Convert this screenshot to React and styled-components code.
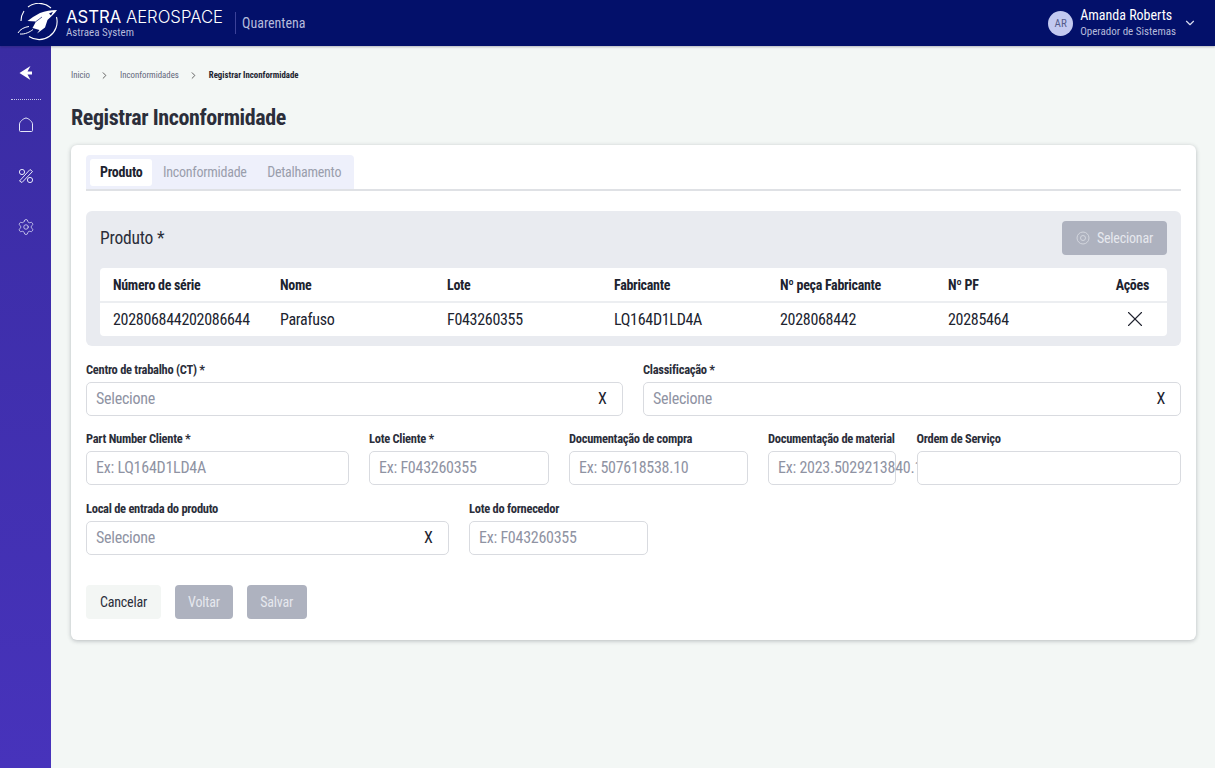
import React from 'react';
import styled, { createGlobalStyle } from 'styled-components';
import { ChevronDown, ChevronRight, X, Settings } from 'lucide-react';

const GlobalStyle = createGlobalStyle`
    html, body {
        margin: 0;
        padding: 0;
        height: 100%;
    }

    body {
        background: #f3f7f5;
        font-family: 'Roboto', 'Liberation Sans', sans-serif;
        font-stretch: 75%;
        color: #20232f;
    }

    * {
        box-sizing: border-box;
    }
`;

const Page = styled.div`
    width: 1215px;
    height: 768px;
    overflow: hidden;
    display: flex;
    flex-direction: column;
`;

const Header = styled.header`
    height: 46px;
    flex: none;
    background: #03106a;
    display: flex;
    align-items: center;
    padding: 0 18px 0 16px;
    box-shadow: 0 1px 2px rgba(30, 30, 60, 0.3);
    position: relative;
    z-index: 2;
`;

const Logo = styled.svg`
    width: 44px;
    height: 40px;
    flex: none;
`;

const Brand = styled.div`
    margin-left: 6px;
    width: 169px;
    color: #fff;
`;

const BrandName = styled.div`
    font-family: 'Inter', 'Liberation Sans', sans-serif;
    font-stretch: 100%;
    font-size: 16.7px;
    line-height: 18px;
    font-weight: 300;
    white-space: nowrap;

    b {
        font-weight: 400;
    }
`;

const BrandSub = styled.div`
    font-size: 11px;
    line-height: 13px;
    color: #b6bbdc;
`;

const Divider = styled.div`
    width: 1px;
    height: 22px;
    background: #3c4299;
`;

const Module = styled.div`
    margin-left: 6px;
    font-size: 14px;
    color: #b6bbdc;
`;

const User = styled.div`
    margin-left: auto;
    display: flex;
    align-items: center;
    color: #fff;
`;

const Avatar = styled.div`
    width: 25px;
    height: 25px;
    border-radius: 50%;
    background: #c3c9f0;
    color: #555c8c;
    font-size: 11px;
    display: flex;
    align-items: center;
    justify-content: center;
    margin-right: 7px;
`;

const UserText = styled.div`
    margin-right: 7px;
`;

const UserName = styled.div`
    font-size: 14px;
    line-height: 16px;
`;

const UserRole = styled.div`
    font-size: 11px;
    line-height: 14px;
    margin-top: 2px;
    color: #b6bbdc;
`;

const Body = styled.div`
    flex: 1;
    display: flex;
    min-height: 0;
`;

const Sidebar = styled.nav`
    width: 51px;
    flex: none;
    background: linear-gradient(180deg, #3a2ca3 0%, #4733bb 100%);
    display: flex;
    flex-direction: column;
    align-items: center;
    padding-top: 18px;
    color: #e4e6f8;
`;

const SideRule = styled.div`
    width: 30px;
    margin: 17px 0 16px;
    border-top: 1px dotted #c5c7ea;
`;

const SideIcon = styled.div`
    width: 18px;
    height: 18px;
    margin-bottom: ${(p) => (p.$flush ? 0 : 33)}px;
    display: flex;

    svg {
        width: 100%;
        height: 100%;
    }
`;

const Main = styled.main`
    flex: 1;
    padding: 22px 19px 0 20px;
    min-width: 0;
`;

const Crumbs = styled.div`
    display: flex;
    align-items: center;
    height: 14px;
    font-size: 8.8px;
    color: #62667a;
`;

const CrumbSep = styled(ChevronRight)`
    width: 11px;
    height: 11px;
    margin: 0 9.5px;
    color: #555;
`;

const CrumbCurrent = styled.span`
    font-weight: 700;
    color: #20232f;
`;

const Title = styled.h1`
    margin: 21px 0 13px;
    font-size: 22px;
    line-height: 29px;
    letter-spacing: -0.4px;
    font-weight: 700;
    color: #2b2e3a;
`;

const Card = styled.section`
    height: 495px;
    background: #fff;
    border-radius: 6px;
    box-shadow: 0 1px 4px rgba(40, 45, 60, 0.3);
    padding: 10px 15px 0;
`;

const TabBar = styled.div`
    height: 36px;
    border-bottom: 2px solid #dfe1e5;
`;

const TabGroup = styled.div`
    display: inline-flex;
    height: 34px;
    padding: 4px 3px 4px 4px;
    gap: 0.5px;
    background: #eef0fb;
    border-radius: 4px 4px 0 0;
`;

const Tab = styled.div`
    height: 27px;
    padding: 0 10px 1px;
    display: flex;
    align-items: center;
    border-radius: 3px;
    font-size: 14px;
    letter-spacing: -0.25px;
    font-weight: ${(p) => (p.$active ? 700 : 400)};
    color: ${(p) => (p.$active ? '#20232f' : '#9a9eac')};
    background: ${(p) => (p.$active ? '#fff' : 'transparent')};
`;

const ProductPanel = styled.div`
    margin-top: 20px;
    height: 135px;
    background: #e9ebf0;
    border-radius: 6px;
    padding: 10px 14px 10px;
`;

const PanelHead = styled.div`
    height: 34px;
    display: flex;
    align-items: center;
    justify-content: space-between;
    margin-bottom: 13px;
`;

const PanelTitle = styled.div`
    font-size: 17.5px;
    letter-spacing: -0.2px;
    color: #2b2e3a;
`;

const Button = styled.button`
    height: 34px;
    padding: 0 ${(p) => p.$pad || 14}px;
    border: none;
    border-radius: 4px;
    display: inline-flex;
    align-items: center;
    gap: 7px;
    font-family: inherit;
    font-stretch: 75%;
    font-size: 14px;
    letter-spacing: -0.2px;
    color: ${(p) => (p.$light ? '#2b2e3a' : '#e6e8ee')};
    background: ${(p) => (p.$light ? '#f3f6f4' : '#aeb2bf')};
`;

const ProductTable = styled.div`
    background: #fff;
    border-radius: 4px;
`;

const TableRow = styled.div`
    height: ${(p) => (p.$head ? 35 : 33)}px;
    display: grid;
    grid-template-columns: 167px 167px 167px 166px 168px 1fr 46px;
    align-items: center;
    padding: 0 18px ${(p) => (p.$head ? 0 : 1)}px 13px;
    font-size: ${(p) => (p.$head ? 14 : 16)}px;
    letter-spacing: -0.3px;
    font-weight: ${(p) => (p.$head ? 700 : 400)};
    border-bottom: ${(p) => (p.$head ? '2px solid #eceef1' : 'none')};
`;

const Action = styled.div`
    display: flex;
    justify-content: flex-end;
`;

const RemoveIcon = styled(X)`
    width: 26px;
    height: 26px;
    margin-right: 1px;
    stroke-width: 1;
`;

const FormGrid = styled.div`
    display: grid;
    column-gap: 20.5px;
    grid-template-columns: ${(p) => p.$cols};
    margin-top: ${(p) => p.$top}px;
`;

const Field = styled.div`
    position: relative;
    min-width: 0;
`;

const Label = styled.div`
    height: 15px;
    font-size: 12.5px;
    line-height: 15px;
    letter-spacing: -0.28px;
    font-weight: 700;
    margin-bottom: 5px;
    white-space: nowrap;
    color: #2b2e3a;
`;

const Control = styled.div`
    height: 34px;
    padding: 0 ${(p) => (p.$select ? 15 : 9)}px 1px 9px;
    background: #fff;
    border: 1px solid #d9dbe0;
    border-radius: 5px;
    display: flex;
    align-items: center;
    justify-content: space-between;
    font-size: 16px;
    letter-spacing: -0.25px;
    white-space: nowrap;
    color: #8f93a3;
`;

const ClearMark = styled.span`
    font-size: 16px;
    color: #20232f;
`;

const Actions = styled.div`
    display: flex;
    gap: 13.5px;
    margin-top: 30px;
`;

const RocketLogo = () => (
    <Logo viewBox="0 0 44 40" fill="none">
        <path d="M12 4A18 18 0 0 1 35 5M40.500 14A18 18 0 0 1 13 33.500M5 18A18 18 0 0 1 8 8" stroke="#fff" strokeWidth="1.1" />
        <path d="M2 30C4 26 9 24 13 23.500M4 31C9 31.500 14 29 17 26.500" stroke="#fff" strokeWidth="1" />
        <path d="M41 7C35 7.300 29 8 24 10L17 14L11.500 18L20 18.500L16.500 25L23.500 27L21 30.500L29 24.500L31.500 17C35 14 39 10 41 7Z" fill="#fff" />
        <path d="M33 10.500L37 8.800L35 12.500Z" fill="#03106a" />
        <path d="M20 18.500L26 14" stroke="#03106a" strokeWidth="0.7" />
    </Logo>
);

const BackIcon = () => (
    <svg viewBox="0 0 18 18" fill="#fff">
        <path d="M13.500 2L2.500 9L13.500 16L10.500 10.500L15 10.500L15 7.500L10.500 7.500Z" />
    </svg>
);

const HomeIcon = () => (
    <svg viewBox="0 0 18 18" fill="none" stroke="currentColor" strokeWidth="1">
        <path d="M2.500 8C2.500 6 6 2.500 9 2C12 2.500 15.500 6 15.500 8L15.500 14.500C15.500 15.300 15 15.500 14.500 15.500L3.500 15.500C3 15.500 2.500 15.300 2.500 14.500Z" />
    </svg>
);

const ToolsIcon = () => (
    <svg viewBox="0 0 18 18" fill="none" stroke="currentColor" strokeWidth="1">
        <circle cx="5" cy="5" r="2.600" />
        <circle cx="13" cy="13" r="2.600" />
        <path d="M2.500 14L13 2.500L15.500 4.500L5 15.500Z" />
    </svg>
);

const FIELDS_ROW_2 = [
    { label: 'Part Number Cliente *', placeholder: 'Ex: LQ164D1LD4A' },
    { label: 'Lote Cliente *', placeholder: 'Ex: F043260355' },
    { label: 'Documentação de compra', placeholder: 'Ex: 507618538.10' },
    { label: 'Documentação de material', placeholder: 'Ex: 2023.5029213840.1' },
    { label: 'Ordem de Serviço', placeholder: '' },
];

const FormField = ({ label, placeholder, select }) => (
    <Field>
        <Label>{label}</Label>
        <Control $select={select}>
            <span>{placeholder}</span>
            {select && <ClearMark>X</ClearMark>}
        </Control>
    </Field>
);

function App() {
    return (
        <Page>
            <GlobalStyle />
            <Header>
                <RocketLogo />
                <Brand>
                    <BrandName><b>ASTRA</b> AEROSPACE</BrandName>
                    <BrandSub>Astraea System</BrandSub>
                </Brand>
                <Divider />
                <Module>Quarentena</Module>
                <User>
                    <Avatar>AR</Avatar>
                    <UserText>
                        <UserName>Amanda Roberts</UserName>
                        <UserRole>Operador de Sistemas</UserRole>
                    </UserText>
                    <ChevronDown size={14} color="#d8dbef" />
                </User>
            </Header>
            <Body>
                <Sidebar>
                    <SideIcon $flush><BackIcon /></SideIcon>
                    <SideRule />
                    <SideIcon><HomeIcon /></SideIcon>
                    <SideIcon><ToolsIcon /></SideIcon>
                    <SideIcon><Settings strokeWidth={1} /></SideIcon>
                </Sidebar>
                <Main>
                    <Crumbs>
                        <span>Inicio</span>
                        <CrumbSep />
                        <span>Inconformidades</span>
                        <CrumbSep />
                        <CrumbCurrent>Registrar Inconformidade</CrumbCurrent>
                    </Crumbs>
                    <Title>Registrar Inconformidade</Title>
                    <Card>
                        <TabBar>
                            <TabGroup>
                                <Tab $active>Produto</Tab>
                                <Tab>Inconformidade</Tab>
                                <Tab>Detalhamento</Tab>
                            </TabGroup>
                        </TabBar>
                        <ProductPanel>
                            <PanelHead>
                                <PanelTitle>Produto *</PanelTitle>
                                <Button>
                                    <svg width="14" height="14" viewBox="0 0 14 14" fill="none" stroke="#d3d6de" strokeWidth="1">
                                        <circle cx="7" cy="7" r="6" />
                                        <circle cx="7" cy="7" r="2.500" />
                                    </svg>
                                    Selecionar
                                </Button>
                            </PanelHead>
                            <ProductTable>
                                <TableRow $head>
                                    <div>Número de série</div>
                                    <div>Nome</div>
                                    <div>Lote</div>
                                    <div>Fabricante</div>
                                    <div>Nº peça Fabricante</div>
                                    <div>Nº PF</div>
                                    <Action>Ações</Action>
                                </TableRow>
                                <TableRow>
                                    <div>202806844202086644</div>
                                    <div>Parafuso</div>
                                    <div>F043260355</div>
                                    <div>LQ164D1LD4A</div>
                                    <div>2028068442</div>
                                    <div>20285464</div>
                                    <Action><RemoveIcon /></Action>
                                </TableRow>
                            </ProductTable>
                        </ProductPanel>
                        <FormGrid $cols="536.500px 1fr" $top={16}>
                            <FormField label="Centro de trabalho (CT) *" placeholder="Selecione" select />
                            <FormField label="Classificação *" placeholder="Selecione" select />
                        </FormGrid>
                        <FormGrid $cols="262.500px 179.500px 178.500px 128px 1fr" $top={15}>
                            {FIELDS_ROW_2.map((field) => (
                                <FormField key={field.label} label={field.label} placeholder={field.placeholder} />
                            ))}
                        </FormGrid>
                        <FormGrid $cols="362.500px 179px" $top={16}>
                            <FormField label="Local de entrada do produto" placeholder="Selecione" select />
                            <FormField label="Lote do fornecedor" placeholder="Ex: F043260355" />
                        </FormGrid>
                        <Actions>
                            <Button $light>Cancelar</Button>
                            <Button $pad={13.5}>Voltar</Button>
                            <Button $pad={13.5}>Salvar</Button>
                        </Actions>
                    </Card>
                </Main>
            </Body>
        </Page>
    );
}

export default App;
